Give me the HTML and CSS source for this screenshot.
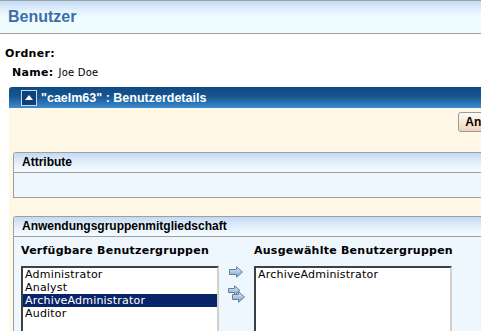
FILE: index.html
```html
<!DOCTYPE html>
<html lang="de">
<head>
    <meta charset="UTF-8">
    <title>Benutzer</title>
    <link rel="stylesheet" href="styles.css">
</head>
<body>
    <div class="page-header">
        <h1>Benutzer</h1>
    </div>

    <div class="info">
        <div class="info-row folder"><span class="info-label">Ordner:</span></div>
        <div class="info-row name"><span class="info-label">Name:</span> <span class="info-value">Joe Doe</span></div>
    </div>

    <div class="panel">
        <div class="panel-bar">
            <span class="toggle">
                <svg width="8" height="5" viewBox="0 0 8 5"><polygon points="0,5 4,0 8,5" fill="#ffffff"/></svg>
            </span>
            <span class="panel-title">"caelm63" : Benutzerdetails</span>
        </div>
        <div class="panel-body">
            <div class="toolbar">
                <button type="button" class="btn">Anwenden</button>
            </div>

            <div class="section">
                <div class="section-head">Attribute</div>
                <div class="section-body attr-body"></div>
            </div>

            <div class="section">
                <div class="section-head">Anwendungsgruppenmitgliedschaft</div>
                <div class="section-body groups">
                    <div class="group-col">
                        <div class="group-label">Verfügbare Benutzergruppen</div>
                        <ul class="listbox">
                            <li>Administrator</li>
                            <li>Analyst</li>
                            <li class="selected">ArchiveAdministrator</li>
                            <li>Auditor</li>
                        </ul>
                    </div>
                    <div class="move-col">
                        <svg class="move-one" width="16" height="12" viewBox="0 0 16 12">
                            <defs>
                                <linearGradient id="ar1" x1="0" y1="0" x2="0" y2="1">
                                    <stop offset="0" stop-color="#e6f0fb"/>
                                    <stop offset="1" stop-color="#6d9fd6"/>
                                </linearGradient>
                            </defs>
                            <polygon points="1.5,3.5 8.5,3.5 8.5,0.8 14.5,6 8.5,11.2 8.5,8.5 1.5,8.5" fill="url(#ar1)" stroke="#6e7c8e" stroke-width="1"/>
                        </svg>
                        <svg class="move-all" width="19" height="18" viewBox="0 0 19 18">
                            <polygon points="1.5,3.5 7.5,3.5 7.5,0.8 13,5.5 7.5,10.2 7.5,7.5 1.5,7.5" fill="url(#ar1)" stroke="#6e7c8e" stroke-width="1"/>
                            <polygon points="5.5,9.5 11.5,9.5 11.5,6.8 17.5,12 11.5,17.2 11.5,14.5 5.5,14.5" fill="url(#ar1)" stroke="#6e7c8e" stroke-width="1"/>
                        </svg>
                    </div>
                    <div class="group-col">
                        <div class="group-label">Ausgewählte Benutzergruppen</div>
                        <ul class="listbox">
                            <li>ArchiveAdministrator</li>
                        </ul>
                    </div>
                </div>
            </div>
        </div>
    </div>
</body>
</html>
```

FILE: styles.css
```css
body {
    margin: 0;
    padding: 0;
    background-color: #ffffff;
    font-family: "DejaVu Sans", Verdana, sans-serif;
    overflow: hidden;
}
.page-header {
    height: 32px;
    border-top: 1px solid #a0a0a0;
    border-bottom: 1px solid #a0a0a0;
    background: linear-gradient(to bottom, #c4dbf6 0%, #e2f1fc 30%, #f0fdff 50%, #f0fdff 100%);
}
.page-header h1 {
    margin: 0;
    padding-left: 8px;
    font-family: "Liberation Sans", Arial, sans-serif;
    font-size: 16px;
    font-weight: bold;
    line-height: 32px;
    color: #3b6ea8;
}
.info {
    padding-top: 11px;
}
.info-row {
    line-height: 14px;
    height: 14px;
}
.info-label {
    font-size: 11px;
    font-weight: bold;
    letter-spacing: 0.3px;
    color: #000000;
}
.folder {
    padding-left: 5px;
    margin-bottom: 5px;
}
.name {
    padding-left: 12px;
}
.info-value {
    font-size: 10px;
    letter-spacing: 0.2px;
}
.panel {
    margin: 9px 0 0 9px;
    width: 528px;
}
.panel-bar {
    display: flex;
    align-items: center;
    height: 21px;
    padding-left: 12px;
    border-top-left-radius: 3px;
    background: linear-gradient(to bottom, #0f4a86 0%, #17568f 45%, #3b8dd2 100%);
}
.toggle {
    display: flex;
    align-items: center;
    justify-content: center;
    width: 14px;
    height: 14px;
    border: 1px solid #c9d9ee;
    background-color: #0d3f78;
    margin-right: 4px;
}
.panel-title {
    font-family: "Liberation Sans", Arial, sans-serif;
    font-size: 12.5px;
    font-weight: bold;
    color: #ffffff;
}
.panel-body {
    background-color: #fff8e6;
    padding: 0 0 0 4px;
    height: 240px;
}
.toolbar {
    display: flex;
    justify-content: flex-end;
    height: 40px;
    padding-top: 4px;
    padding-right: 4px;
}
.btn {
    height: 20px;
    padding: 0 6px;
    border: 1px solid #9a9a9a;
    border-radius: 3px;
    background: linear-gradient(to bottom, #fffaf2 0%, #f7e6d2 60%, #ecd2b8 100%);
    font-family: "Liberation Sans", Arial, sans-serif;
    font-size: 12px;
    font-weight: bold;
    color: #000000;
    cursor: pointer;
}
.section {
    border: 1px solid #a0a0a0;
    border-right: none;
    border-top-left-radius: 3px;
    margin-bottom: 18px;
}
.section-head {
    height: 19px;
    line-height: 19px;
    padding-left: 8px;
    border-bottom: 1px solid #a0a0a0;
    background: linear-gradient(to bottom, #c3daf4 0%, #e4f1fc 55%, #f6fdff 100%);
    font-family: "Liberation Sans", Arial, sans-serif;
    font-size: 12px;
    font-weight: bold;
    color: #000000;
}
.section-body {
    background-color: #eef6fe;
}
.attr-body {
    height: 24px;
}
.groups {
    display: flex;
    padding: 7px 0 0 7px;
    height: 120px;
}
.group-label {
    font-size: 11px;
    font-weight: bold;
    letter-spacing: 0.25px;
    line-height: 14px;
    height: 14px;
    margin-bottom: 8px;
}
.listbox {
    list-style: none;
    margin: 0;
    padding: 0;
    width: 194px;
    height: 100px;
    background-color: #ffffff;
    border-top: 2px solid #404040;
    border-left: 2px solid #404040;
    border-right: 2px solid #d4d0c8;
    border-bottom: 2px solid #d4d0c8;
}
.listbox li {
    font-size: 11px;
    letter-spacing: 0.2px;
    line-height: 13px;
    height: 13px;
    padding-left: 2px;
    white-space: nowrap;
}
.listbox li.selected {
    background-color: #0a246a;
    color: #ffffff;
}
.move-col {
    width: 35px;
    display: flex;
    flex-direction: column;
    padding-top: 22px;
    padding-left: 8px;
    box-sizing: border-box;
}
.move-one {
    margin-left: 1px;
}
.move-all {
    margin-top: 7px;
}
```
